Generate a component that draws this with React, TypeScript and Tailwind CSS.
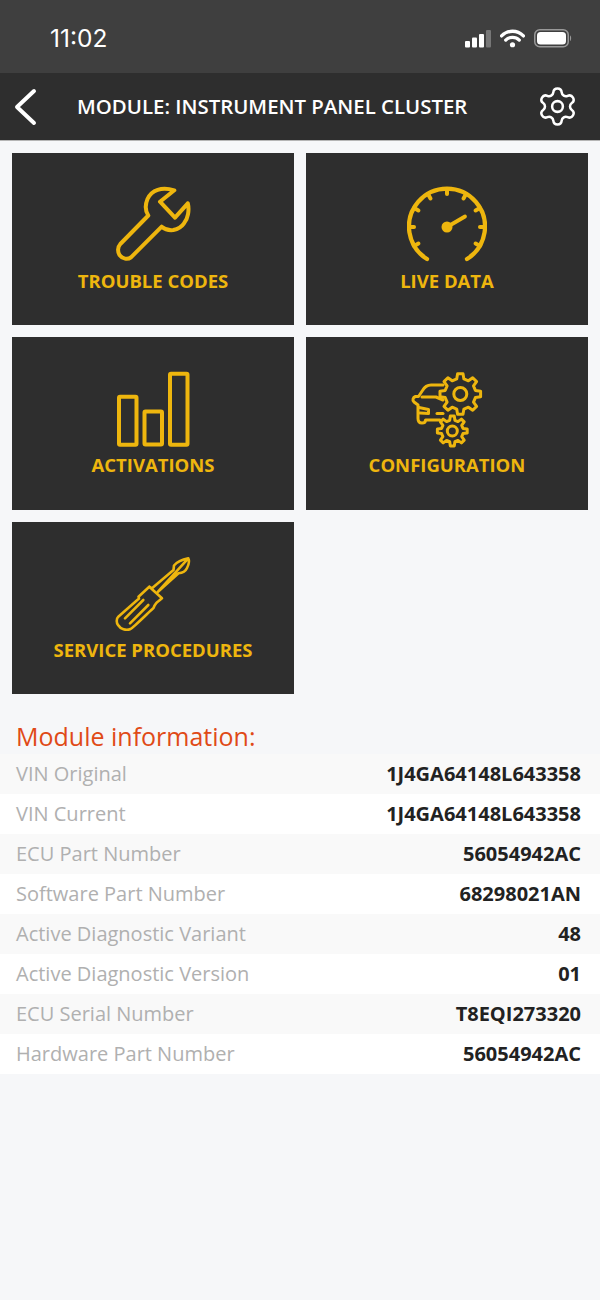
import {ReactNode} from 'react'
import {Settings} from 'lucide-react'

const YELLOW = '#eeb60e'

function gearPath(cx: number, cy: number, outer: number, inner: number, teeth: number) {
  const step = (Math.PI * 2) / teeth
  const pts: string[] = []
  for (let i = 0; i < teeth; i++) {
    const a = i * step - Math.PI / 2
    const spots: [number, number][] = [
      [a - step * 0.3, inner],
      [a - step * 0.17, outer],
      [a + step * 0.17, outer],
      [a + step * 0.3, inner],
    ]
    for (const [an, r] of spots) {
      pts.push(`${(cx + Math.cos(an) * r).toFixed(1)} ${(cy + Math.sin(an) * r).toFixed(1)}`)
    }
  }
  return `M${pts.join('L')}Z`
}

function IconFrame({children}: {children: ReactNode}) {
  return (
    <svg width="80" height="80" viewBox="0 0 80 80" fill="none" stroke={YELLOW} strokeWidth="4" strokeLinecap="round" strokeLinejoin="round">
      {children}
    </svg>
  )
}

function WrenchIcon() {
  return (
    <IconFrame>
      <path d="M61.300 5.300C55 3.500 49 3.500 44.700 4.800C39.500 6.500 36.500 9.500 34.500 14C32 20 32 25.500 35.300 30.500L7.300 59C4.500 62 4.500 67 6.500 70C9.500 74 14.500 75 18 72.300L48.700 41.700C52 44.500 56 45.500 60.300 45C65 44 68.500 42 71 38.300C75 33.500 76.500 25 74.800 18.300L62 32.700L47 16.700Z" />
    </IconFrame>
  )
}

function GaugeIcon() {
  return (
    <IconFrame>
      <path d="M20 74A38 38 0 1 1 60 74" strokeWidth="4.300" />
      {[-180, -150, -120, -90, -60, -30, 0, 30, 150].map((deg) => {
        const r = (deg * Math.PI) / 180
        return (
          <line
            key={deg}
            x1={40 + Math.cos(r) * 38}
            y1={42 + Math.sin(r) * 38}
            x2={40 + Math.cos(r) * 33}
            y2={42 + Math.sin(r) * 33}
            strokeWidth="4"
          />
        )
      })}
      <line x1="40" y1="42" x2="58" y2="31.500" strokeWidth="3.800" />
      <circle cx="40" cy="42" r="5.500" fill={YELLOW} stroke="none" />
    </IconFrame>
  )
}

function BarsIcon() {
  return (
    <IconFrame>
      <rect x="6" y="27.700" width="17.500" height="48" rx="1" />
      <rect x="31.500" y="42.500" width="17.500" height="33" rx="1" />
      <rect x="57" y="4.800" width="17.500" height="71" rx="1" />
    </IconFrame>
  )
}

function ConfigIcon() {
  return (
    <IconFrame>
      <g strokeWidth="3">
        <path d={gearPath(53.3, 25, 20.5, 15.5, 8)} />
        <circle cx="53.300" cy="25" r="6.500" />
        <path d={gearPath(45.3, 62, 15, 11, 8)} />
        <circle cx="45.300" cy="62" r="5" />
        <path d="M36 16H24C20 16 17.500 18 15.500 21.500L11.500 27.500H8.500C6 28.500 5 31 7 33L11 36V49.500C11 52.500 12.500 54 15 54C17.500 54 18.500 52.500 18.500 51H33" />
        <path d="M15 28H29L36 31" />
        <path d="M12 38.500L21.500 40.500V44.500L13 44" />
        <path d="M30 44.500H36" />
      </g>
    </IconFrame>
  )
}

function ScrewdriverIcon() {
  return (
    <IconFrame>
      <g strokeWidth="2.600">
        <path d="M75.300 4.300C69.500 5.500 63.500 8.500 61 11.500L60.500 16L39 34.300L36.300 32.700L25.500 42.700L26 44.500L5.300 62.700C3 65 3.500 69 5 71C7.500 75 13 77 17.500 75C20 74 38 56 40.500 54C42 50 43 49 49 44.300L36.300 32.700M45 37.700L65.500 19.300C69.500 19 72.500 17.500 74 14C75.500 11 76.500 6.500 75.300 4.300Z" />
        <path d="M12 64.300L30.300 46" />
        <path d="M17 69.300L35.300 51" />
      </g>
    </IconFrame>
  )
}

function Tile({label, icon}: {label: string; icon: ReactNode}) {
  return (
    <div className="h-[172.4px] bg-[#2e2e2e] flex flex-col items-center pt-8">
      {icon}
      <span className="mt-1 text-[18.500px] leading-6 font-bold text-[#eeb60e]">{label}</span>
    </div>
  )
}

const rows = [
  ['VIN Original', '1J4GA64148L643358'],
  ['VIN Current', '1J4GA64148L643358'],
  ['ECU Part Number', '56054942AC'],
  ['Software Part Number', '68298021AN'],
  ['Active Diagnostic Variant', '48'],
  ['Active Diagnostic Version', '01'],
  ['ECU Serial Number', 'T8EQI273320'],
  ['Hardware Part Number', '56054942AC'],
]

export default function App() {
  return (
    <div className="w-[600px] h-[1300px] bg-[#f6f7f9] font-['Open_Sans',sans-serif] overflow-hidden">
      {/* STATUS BAR */}
      <div className="h-[73px] bg-[#3f3f3f] flex items-center justify-between pl-[50px] pr-[28px] pt-[4px] text-white">
        <span className="font-['Inter',sans-serif] text-[24.500px]">11:02</span>
        <div className="flex items-center gap-[9px]">
          <svg width="26" height="18" viewBox="0 0 26 18" fill="#fff">
            <rect x="0" y="11" width="5" height="6.500" rx="1" />
            <rect x="7" y="7.500" width="5" height="10" rx="1" />
            <rect x="14" y="4" width="5" height="13.500" rx="1" />
            <rect x="21" y="0" width="5" height="17.500" rx="1" fill="#777" />
          </svg>
          <svg width="25" height="19" viewBox="0 0 24 18" fill="none" stroke="#fff" strokeWidth="3.200" strokeLinecap="round">
            <path d="M1.500 6.500C7.500 .5 16.500 .5 22.500 6.500" />
            <path d="M5.500 10.500C9 7 15 7 18.500 10.500" />
            <circle cx="12" cy="15" r="2.500" fill="#fff" stroke="none" />
          </svg>
          <svg width="38" height="19" viewBox="0 0 38 19" fill="none">
            <rect x=".75" y=".75" width="33.500" height="17" rx="5" stroke="#999" strokeWidth="1.500" />
            <rect x="3" y="3" width="29" height="12.500" rx="3.500" fill="#fff" />
            <path d="M36 6.500C37.500 7 37.500 11.500 36 12Z" fill="#999" />
          </svg>
        </div>
      </div>

      {/* NAV */}
      <div className="h-[68px] bg-[#2e2e2e] border-b border-[#b5b5b5] flex items-center text-white">
        <svg className="ml-[14px] shrink-0" width="24" height="38" viewBox="0 0 24 38" fill="none" stroke="#fff" strokeWidth="4" strokeLinecap="round" strokeLinejoin="round">
          <path d="M20 3L3 19L20 35" />
        </svg>
        <h1 className="ml-[39px] text-[20.400px] font-semibold whitespace-nowrap">MODULE: INSTRUMENT PANEL CLUSTER</h1>
        <Settings className="ml-auto mr-[21px]" size={43} strokeWidth={1.4} />
      </div>

      {/* TILES */}
      <div className="grid grid-cols-2 gap-3 px-3 pt-3">
        <Tile label="TROUBLE CODES" icon={<WrenchIcon />} />
        <Tile label="LIVE DATA" icon={<GaugeIcon />} />
        <Tile label="ACTIVATIONS" icon={<BarsIcon />} />
        <Tile label="CONFIGURATION" icon={<ConfigIcon />} />
        <Tile label="SERVICE PROCEDURES" icon={<ScrewdriverIcon />} />
      </div>

      {/* INFO */}
      <h2 className="mt-[26px] pl-4 text-[25px] leading-[32px] text-[#e04a17]">Module information:</h2>
      <div className="mt-[2px]">
        {rows.map(([label, value], i) => (
          <div key={label} className={`h-10 flex items-center justify-between pl-4 pr-[19px] text-[20px] ${i % 2 === 0 ? 'bg-[#f9f9f9]' : 'bg-white'}`}>
            <span className="text-[#b0b0b0]">{label}</span>
            <span className="font-bold text-[#222222]">{value}</span>
          </div>
        ))}
      </div>
    </div>
  )
}
